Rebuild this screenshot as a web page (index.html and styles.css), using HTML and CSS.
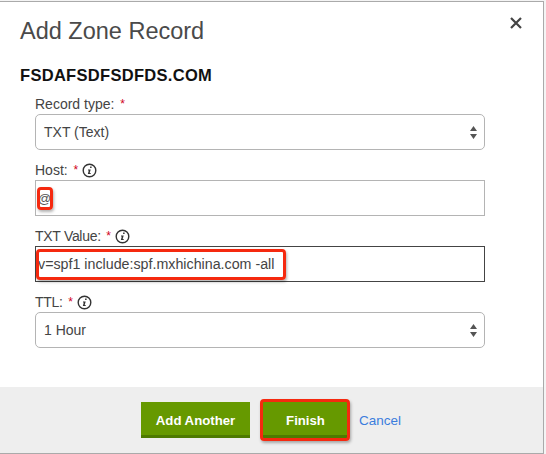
FILE: index.html
```html
<!DOCTYPE html>
<html lang="en">
<head>
<meta charset="utf-8">
<title>Add Zone Record</title>
<link rel="stylesheet" href="styles.css">
</head>
<body>
<div class="modal">
  <div class="body">
    <button class="close" aria-label="Close">
      <svg width="12" height="12" viewBox="0 0 12 12"><path d="M1 1 11 11M11 1 1 11" stroke="#444" stroke-width="2.2" fill="none"/></svg>
    </button>
    <h1 class="title">Add Zone Record</h1>
    <h2 class="domain">FSDAFSDFSDFDS.COM</h2>
    <form class="form">
      <div class="field">
        <label class="label">Record type: <span class="req">*</span></label>
        <div class="select">
          <span>TXT (Text)</span>
          <svg width="7" height="13" viewBox="0 0 7 13"><path d="M3.5 0 7 5H0ZM0 8H7L3.5 13Z" fill="#555"/></svg>
        </div>
      </div>
      <div class="field">
        <label class="label">Host: <span class="req">*</span>
          <svg class="info" width="15" height="15" viewBox="0 0 15 15"><circle cx="7.5" cy="7.5" r="6.3" fill="none" stroke="#333" stroke-width="1.4"/><path d="M8.1 3.4h1.5v1.5H8.100ZM6 6.400h2.700l-1 3.700h1v1H5.800l1-3.700H6Z" fill="#333"/></svg>
        </label>
        <div class="input">
          <span class="at">@</span>
          <span class="mark mark-at"></span>
        </div>
      </div>
      <div class="field">
        <label class="label label-tight">TXT Value: <span class="req">*</span>
          <svg class="info" width="15" height="15" viewBox="0 0 15 15"><circle cx="7.5" cy="7.5" r="6.3" fill="none" stroke="#333" stroke-width="1.4"/><path d="M8.1 3.4h1.5v1.5H8.100ZM6 6.400h2.700l-1 3.700h1v1H5.800l1-3.700H6Z" fill="#333"/></svg>
        </label>
        <div class="input input-focus">
          <span class="value">v=spf1 include:spf.mxhichina.com -all</span>
          <span class="mark mark-txt"></span>
        </div>
      </div>
      <div class="field">
        <label class="label label-tight">TTL: <span class="req">*</span>
          <svg class="info" width="15" height="15" viewBox="0 0 15 15"><circle cx="7.5" cy="7.5" r="6.3" fill="none" stroke="#333" stroke-width="1.4"/><path d="M8.1 3.4h1.5v1.5H8.100ZM6 6.400h2.700l-1 3.700h1v1H5.800l1-3.700H6Z" fill="#333"/></svg>
        </label>
        <div class="select">
          <span>1 Hour</span>
          <svg width="7" height="13" viewBox="0 0 7 13"><path d="M3.5 0 7 5H0ZM0 8H7L3.500 13Z" fill="#555"/></svg>
        </div>
      </div>
    </form>
  </div>
  <div class="footer">
    <button class="btn btn-add">Add Another</button>
    <button class="btn btn-finish">Finish<span class="mark mark-finish"></span></button>
    <a class="cancel" href="#">Cancel</a>
  </div>
</div>
</body>
</html>
```
FILE: styles.css
```css
* {
  box-sizing: border-box;
}

html,
body {
  margin: 0;
  height: 100%;
  background: #f4f4f4;
  overflow: hidden;
}

body {
  padding-top: 1px;
  font-family: "Liberation Sans", Arial, sans-serif;
  color: #444;
}

.modal {
  width: 544px;
  height: 453px;
  display: flex;
  flex-direction: column;
  background: #fff;
  border: 1px solid #aaa;
  border-left: 0;
}

.body {
  position: relative;
  flex: 1;
  padding: 0 58px 0 20px;
}

.close {
  position: absolute;
  top: 15px;
  right: 21px;
  padding: 0;
  border: 0;
  background: none;
  display: flex;
}

.title {
  margin: 0;
  padding-top: 14px;
  font-size: 23.500px;
  line-height: 30px;
  font-weight: 400;
  color: #4a4a4a;
}

.domain {
  margin: 0;
  padding-top: 20px;
  font-size: 16.500px;
  letter-spacing: 0.300px;
  line-height: 18px;
  font-weight: 700;
  color: #111;
}

.form {
  display: flex;
  flex-direction: column;
  gap: 10px;
  padding: 10px 0 0 15px;
}

.field {
  display: flex;
  flex-direction: column;
}

.label {
  display: flex;
  align-items: center;
  gap: 2px;
  height: 20px;
  font-size: 14px;
  color: #444;
  white-space: pre;
}

.label-tight {
  letter-spacing: -0.300px;
}

.req {
  color: #d0021b;
  font-size: 12px;
}

.info {
  margin-left: 2px;
}

.select,
.input {
  position: relative;
  display: flex;
  align-items: center;
  height: 36px;
  width: 450px;
  border: 1px solid #b4b4b4;
  font-size: 14px;
  color: #444;
  background: #fff;
}

.select {
  justify-content: space-between;
  padding: 0 7px 0 8px;
  border-radius: 5px;
}

.input {
  padding-left: 2px;
}

.input-focus {
  border-color: #444;
}

.value {
  font-size: 14.250px;
}

.at {
  font-size: 13px;
  color: #555;
}

.mark {
  position: absolute;
  border: 3px solid #f5290f;
  border-radius: 4px;
  box-shadow: 1px 2px 3px rgba(0, 0, 0, 0.3);
}

.mark-at {
  left: 1px;
  top: 6px;
  width: 16px;
  height: 23px;
}

.mark-txt {
  left: 0;
  top: 2px;
  width: 250px;
  height: 31px;
}

.mark-finish {
  left: -3px;
  top: -3px;
  width: 90px;
  height: 42px;
}

.footer {
  display: flex;
  align-items: center;
  gap: 11px;
  height: 66px;
  padding-left: 141px;
  background: #eee;
}

.btn {
  position: relative;
  height: 36px;
  padding: 3px 0 0;
  border: 0;
  border-bottom: 3px solid #4d7a00;
  background: #669900;
  color: #fff;
  font-family: inherit;
  font-size: 13.200px;
  font-weight: 700;
}

.btn-add {
  width: 109px;
}

.btn-finish {
  width: 85px;
  margin-left: 2px;
}

.cancel {
  color: #3b7ddd;
  font-size: 13.500px;
  text-decoration: none;
}
```
